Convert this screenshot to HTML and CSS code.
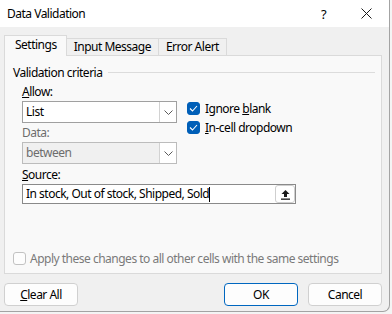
FILE: index.html
```html
<!DOCTYPE html>
<html lang="en">
<head>
  <meta charset="UTF-8" />
  <title>Data Validation</title>
  <link rel="stylesheet" href="styles.css">
</head>
<body>
  <div class="dialog">
    <div class="titlebar">
      <span class="title">Data Validation</span>
      <span class="help">?</span>
      <span class="close">
        <svg width="11" height="11" viewBox="0 0 11 11"><path d="M0.5 0.5 L10.5 10.5 M10.5 0.5 L0.5 10.5" stroke="#1a1a1a" stroke-width="1" fill="none"/></svg>
      </span>
    </div>

    <div class="content">
      <div class="tabs">
        <div class="tab active">Settings</div>
        <div class="tab">Input Message</div>
        <div class="tab">Error Alert</div>
      </div>

      <div class="panel">
        <div class="group-head">
          <span>Validation criteria</span>
          <div class="group-line"></div>
        </div>

        <div class="criteria">
          <div class="left-col">
            <div class="label"><u>A</u>llow:</div>
            <div class="combo">
              <span class="combo-text">List</span>
              <span class="combo-btn">
                <svg width="9" height="5" viewBox="0 0 9 5"><path d="M0.5 0.5 L4.5 4.5 L8.5 0.5" stroke="#5a5a5a" fill="none"/></svg>
              </span>
            </div>
            <div class="label disabled">Data:</div>
            <div class="combo disabled">
              <span class="combo-text">between</span>
              <span class="combo-btn">
                <svg width="9" height="5" viewBox="0 0 9 5"><path d="M0.5 0.5 L4.5 4.5 L8.5 0.5" stroke="#5a5a5a" fill="none"/></svg>
              </span>
            </div>
          </div>
          <div class="right-col">
            <div class="check-row">
              <span class="box checked">
                <svg width="9" height="7" viewBox="0 0 9 7"><path d="M1 3.5 L3.5 6 L8 1" stroke="#fff" stroke-width="1.1" fill="none"/></svg>
              </span>
              <span>Ignore <u>b</u>lank</span>
            </div>
            <div class="check-row">
              <span class="box checked">
                <svg width="9" height="7" viewBox="0 0 9 7"><path d="M1 3.5 L3.5 6 L8 1" stroke="#fff" stroke-width="1.1" fill="none"/></svg>
              </span>
              <span><u>I</u>n-cell dropdown</span>
            </div>
          </div>
        </div>

        <div class="source">
          <div class="label"><u>S</u>ource:</div>
          <div class="source-input">
            <span class="source-text">In stock, Out of stock, Shipped, Sold</span><span class="caret"></span>
            <span class="pick-btn">
              <svg width="11" height="11" viewBox="0 0 11 11"><path d="M5.5 1 L1.5 5 H4 V8 H7 V5 H9.5 Z" fill="#1a1a1a"/><rect x="1" y="9.5" width="9" height="1.3" fill="#1a1a1a"/></svg>
            </span>
          </div>
        </div>

        <div class="apply-row">
          <span class="box"></span>
          <span>Apply these changes to all other cells with the same settings</span>
        </div>
      </div>

      <div class="buttons">
        <div class="btn"><u>C</u>lear All</div>
        <div class="spacer"></div>
        <div class="btn default">OK</div>
        <div class="btn">Cancel</div>
      </div>
    </div>
  </div>
</body>
</html>
```

FILE: styles.css
```css
html, body {
  margin: 0;
  padding: 0;
  width: 392px;
  height: 314px;
  overflow: hidden;
  background: #f4f4f4;
  font-family: 'Noto Sans', 'Open Sans', sans-serif;
  font-size: 12px;
  letter-spacing: -0.5px;
  color: #000;
}
* { box-sizing: border-box; }

.dialog {
  width: 390px;
  height: 312px;
  background: #f0f0f0;
  border-right: 1px solid #a3a3a3;
  border-bottom: 1px solid #a3a3a3;
  border-bottom-right-radius: 7px;
  overflow: hidden;
}

.titlebar {
  height: 27px;
  background: #fff;
  display: flex;
  align-items: center;
  padding-left: 7px;
}

.title {
  flex: 1;
  line-height: 16px;
}

.help {
  width: 10px;
  margin-right: 30px;
  font-size: 13px;
}

.close {
  width: 11px;
  height: 11px;
  margin-right: 17px;
  display: flex;
}

.content {
  padding: 8px 7px 0 4px;
}

.tabs {
  display: flex;
  align-items: flex-end;
  height: 20px;
}

.tab {
  height: 17px;
  padding: 0 7px;
  line-height: 15px;
  background: #f0f0f0;
  border: 1px solid #dadada;
  border-bottom: none;
  margin-left: -1px;
}

.tab:first-child { margin-left: 0; }

.tab.active {
  height: 21px;
  padding: 0 9px 0 10px;
  line-height: 18px;
  background: #f9f9f9;
  margin-bottom: -1px;
  position: relative;
  z-index: 1;
}

.panel {
  height: 219px;
  background: #f9f9f9;
  border: 1px solid #dadada;
  padding: 8px 0 0 0;
}

.group-head {
  display: flex;
  align-items: center;
  padding-left: 8px;
  padding-right: 6px;
  height: 16px;
}

.group-line {
  flex: 1;
  height: 1px;
  background: #dcdcdc;
  margin-left: 6px;
}

.criteria {
  display: flex;
  padding-left: 17px;
  margin-top: 4px;
}

.left-col {
  width: 155px;
}

.label {
  height: 16px;
  line-height: 16px;
}

.label.disabled { color: #6d6d6d; }

.combo {
  height: 22px;
  margin-top: 1px;
  margin-bottom: 2px;
  border: 1px solid #a0a0a0;
  background: #fff;
  display: flex;
  align-items: stretch;
}

.combo.disabled {
  background: #f0f0f0;
  border-color: #bcbcbc;
  color: #6d6d6d;
}

.combo-text {
  flex: 1;
  padding-left: 3px;
  line-height: 20px;
}

.combo-btn {
  width: 17px;
  background: #fff;
  border-left: 1px solid #d2d2d2;
  display: flex;
  align-items: center;
  justify-content: center;
}

.right-col {
  margin-left: 10px;
  padding-top: 15px;
}

.check-row {
  display: flex;
  align-items: center;
  height: 19px;
  gap: 5px;
}

.box {
  width: 13px;
  height: 13px;
  border: 1px solid #c2c2c2;
  border-radius: 3px;
  background: #fdfdfd;
  display: flex;
  align-items: center;
  justify-content: center;
}

.box.checked {
  background: #005fb8;
  border-color: #005fb8;
}

.source {
  padding-left: 17px;
  margin-top: 1px;
}

.source-input {
  width: 274px;
  height: 20px;
  margin-top: 1px;
  border: 1px solid #8a8a8a;
  background: #fff;
  display: flex;
  align-items: center;
  padding-left: 3px;
}

.source-text {
  line-height: 16px;
}

.caret {
  width: 1px;
  height: 15px;
  background: #000;
}

.pick-btn {
  margin-left: auto;
  width: 20px;
  height: 18px;
  border: 1px solid #cfcfcf;
  border-radius: 3px;
  background: #fff;
  display: flex;
  align-items: center;
  justify-content: center;
}

.apply-row {
  display: flex;
  align-items: center;
  gap: 4px;
  padding-left: 8px;
  margin-top: 46px;
  color: #7a7a7a;
}

.buttons {
  display: flex;
  margin-top: 9px;
}

.spacer { flex: 1; }

.btn {
  width: 74px;
  height: 23px;
  line-height: 21px;
  text-align: center;
  background: #fdfdfd;
  border: 1px solid #d0d0d0;
  border-radius: 4px;
}

.btn.default {
  border-color: #0067c0;
  margin-right: 10px;
}
```
